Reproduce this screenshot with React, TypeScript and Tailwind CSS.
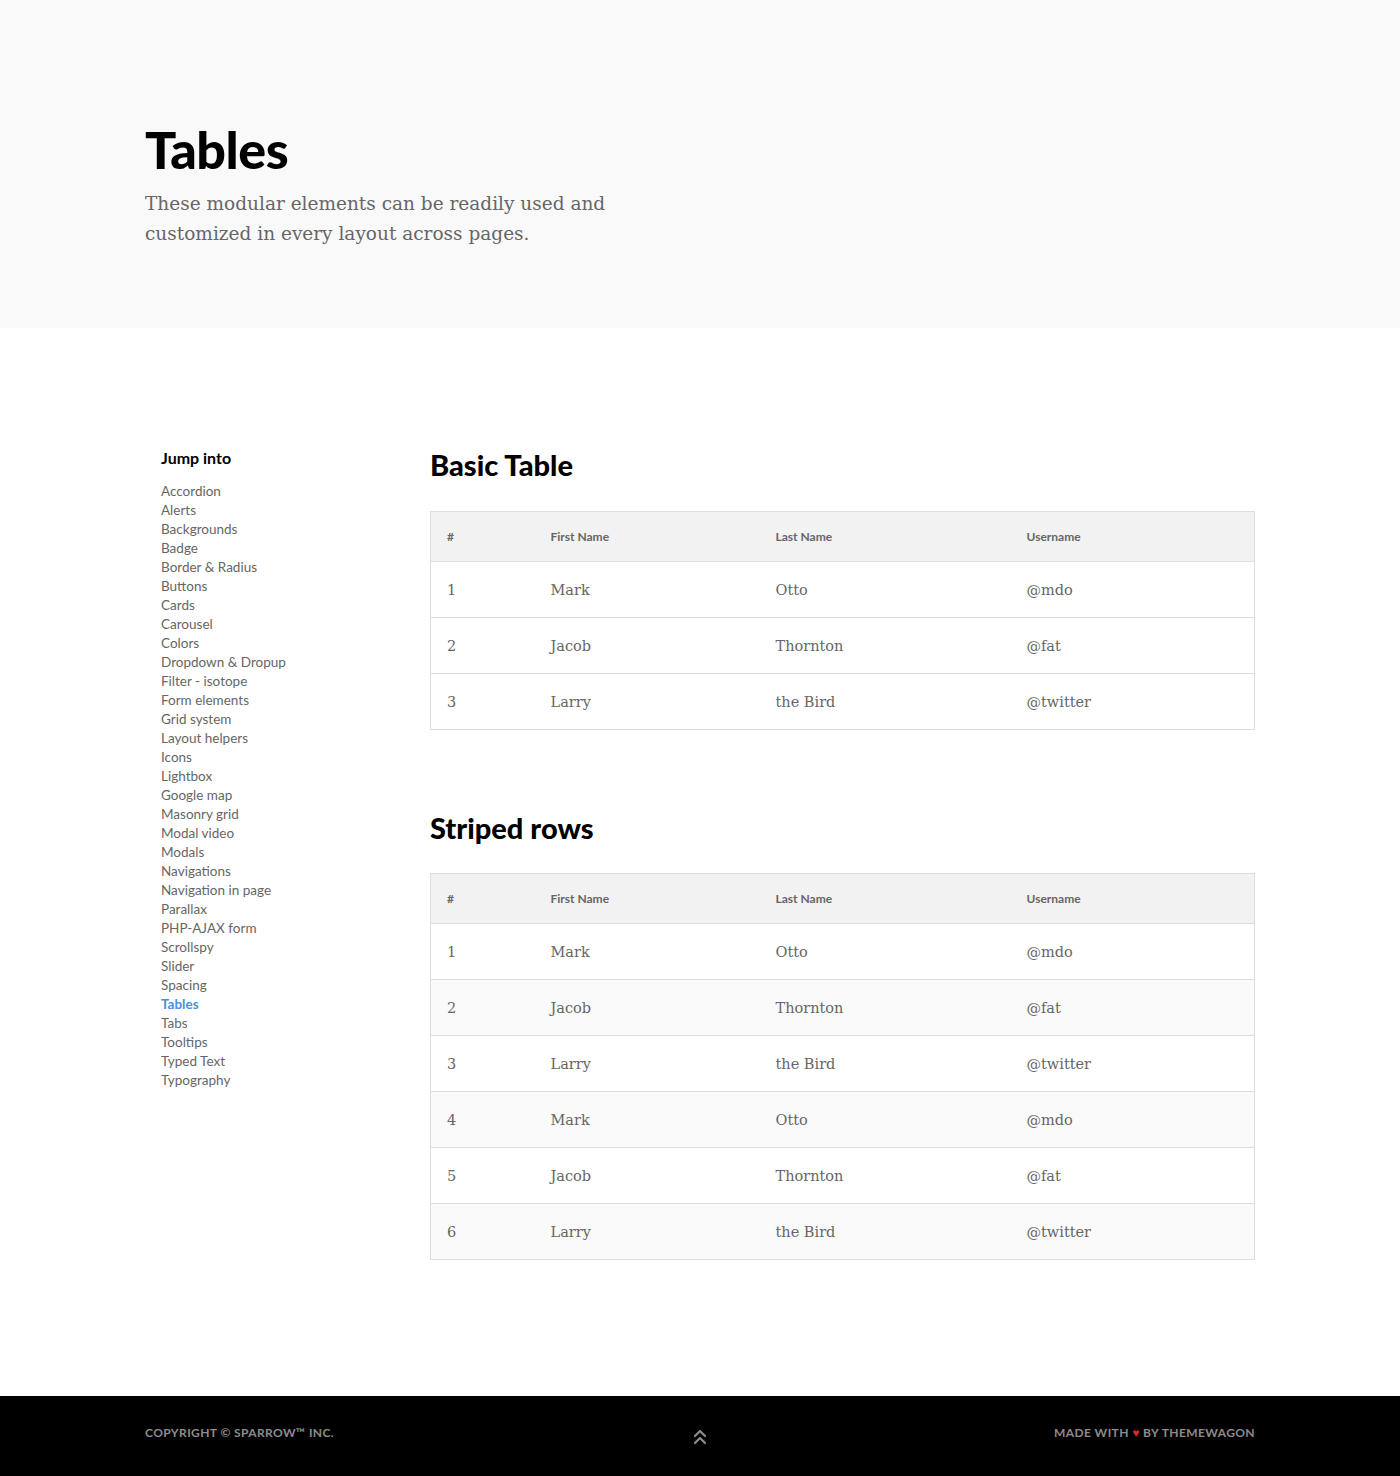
import { ChevronsUp } from "lucide-react";

const links = [
  "Accordion",
  "Alerts",
  "Backgrounds",
  "Badge",
  "Border & Radius",
  "Buttons",
  "Cards",
  "Carousel",
  "Colors",
  "Dropdown & Dropup",
  "Filter - isotope",
  "Form elements",
  "Grid system",
  "Layout helpers",
  "Icons",
  "Lightbox",
  "Google map",
  "Masonry grid",
  "Modal video",
  "Modals",
  "Navigations",
  "Navigation in page",
  "Parallax",
  "PHP-AJAX form",
  "Scrollspy",
  "Slider",
  "Spacing",
  "Tables",
  "Tabs",
  "Tooltips",
  "Typed Text",
  "Typography",
];

const basicRows = [
  ["1", "Mark", "Otto", "@mdo"],
  ["2", "Jacob", "Thornton", "@fat"],
  ["3", "Larry", "the Bird", "@twitter"],
];

const stripedRows = [...basicRows, ["4", "Mark", "Otto", "@mdo"], ["5", "Jacob", "Thornton", "@fat"], ["6", "Larry", "the Bird", "@twitter"]];

const lato = "font-['Lato','Liberation_Sans',sans-serif]";
const serif = "font-['DejaVu_Serif','Liberation_Serif',serif]";

function DataTable({ rows, striped = false }: { rows: string[][]; striped?: boolean }) {
  return (
    <table className="w-full border-collapse border border-[#dedede] table-fixed">
      <colgroup>
        <col className="w-[104px]" />
        <col className="w-[225px]" />
        <col className="w-[251px]" />
        <col />
      </colgroup>
      <thead>
        <tr className="h-[50px] bg-[#f2f2f2]">
          {["#", "First Name", "Last Name", "Username"].map((h) => (
            <th key={h} className={`${lato} text-left font-bold text-[12px] text-[#666] pl-4`}>
              {h}
            </th>
          ))}
        </tr>
      </thead>
      <tbody>
        {rows.map((r, i) => (
          <tr
            key={i}
            className={`h-[56px] border-t border-[#dedede] ${striped && i % 2 === 1 ? "bg-[#fafafa]" : "bg-white"}`}
          >
            {r.map((c, j) => (
              <td key={j} className={`${serif} text-[14.5px] text-[#666] pl-4 pt-[2px]`}>
                {c}
              </td>
            ))}
          </tr>
        ))}
      </tbody>
    </table>
  );
}

export default function App() {
  return (
    <div className={`${lato} bg-white min-h-[1476px] flex flex-col`}>
      <header className="bg-[#f9f9f9] h-[328px]">
        <div className="w-[1110px] mx-auto pt-[123px]">
          <h1 className="text-[52px] font-black leading-none text-black tracking-[-0.5px]">Tables</h1>
          <p className={`${serif} mt-[14px] text-[18.5px] leading-[30px] text-[#666] w-[480px]`}>
            These modular elements can be readily used and customized in every layout across pages.
          </p>
        </div>
      </header>

      <main className="w-[1110px] mx-auto flex pt-[123px] pb-[136px]">
        <aside className="w-[285px] shrink-0 pl-4">
          <h6 className="text-[16px] font-bold text-black leading-5 mt-[-3px]">Jump into</h6>
          <ul className="mt-[14px]">
            {links.map((l) => (
              <li
                key={l}
                className={`text-[13.5px] leading-[19px] ${l === "Tables" ? "text-[#4a90d9] font-bold" : "text-[#666]"}`}
              >
                {l}
              </li>
            ))}
          </ul>
        </aside>

        <section className="w-[825px]">
          <h2 className="text-[29px] font-black text-black leading-[36px] mt-[-4px]">Basic Table</h2>
          <div className="mt-[28px]">
            <DataTable rows={basicRows} />
          </div>

          <h2 className="text-[29px] font-black text-black leading-[36px] mt-[80px]">Striped rows</h2>
          <div className="mt-[27px]">
            <DataTable rows={stripedRows} striped />
          </div>
        </section>
      </main>

      <footer className="bg-black h-[80px] mt-auto">
        <div className="w-[1110px] mx-auto h-full flex items-center justify-between">
          <span className="text-[12px] font-bold uppercase tracking-[0.4px] text-[#8c8c8c] w-[300px] mb-[6px]">
            Copyright © Sparrow™ Inc.
          </span>
          <ChevronsUp className="w-[24px] h-[24px] text-[#8c8c8c] mt-[2px]" strokeWidth={2.2} />
          <span className="text-[12px] font-bold uppercase tracking-[0.4px] text-[#8c8c8c] w-[300px] text-right mb-[6px]">
            Made with <span className="text-[#e0242f]">♥</span> by Themewagon
          </span>
        </div>
      </footer>
    </div>
  );
}
